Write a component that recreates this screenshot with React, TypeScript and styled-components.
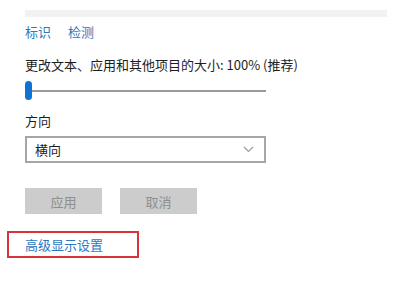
import styled, { createGlobalStyle } from 'styled-components'

const GlobalStyle = createGlobalStyle`
	body {
		margin: 0;
		background: #fff;
		font-family: "Noto Sans CJK SC", "Liberation Sans", sans-serif;
	}
`

const Page = styled.div`
	width: 398px;
	height: 284px;
	padding: 10px 0 0 25px;
	box-sizing: border-box;
	display: flex;
	flex-direction: column;
	overflow: hidden;
`

const TopBar = styled.div`
	width: 362px;
	height: 7px;
	background: #f2f2f2;
`

const LinkRow = styled.div`
	display: flex;
	gap: 17px;
	margin-top: 5px;
	height: 20px;
	align-items: center;
`

const Link = styled.span`
	font-size: 13px;
	line-height: 20px;
	color: #2c79bf;
`

const Label = styled.div<{ $top: number }>`
	margin-top: ${p => p.$top}px;
	font-size: 13px;
	line-height: 20px;
	color: #1e1e1e;
`

const Slider = styled.div`
	margin-top: 6px;
	width: 241px;
	height: 19px;
	display: flex;
	align-items: center;
	position: relative;
`

const Track = styled.div`
	flex: 1;
	height: 2px;
	background: #9a9a9a;
`

const Thumb = styled.div`
	position: absolute;
	left: 0;
	top: 0;
	width: 7px;
	height: 19px;
	border-radius: 4px;
	background: #1172d6;
`

const Select = styled.div`
	margin-top: 5px;
	width: 241px;
	height: 27px;
	box-sizing: border-box;
	border: 2px solid #a6a6a6;
	display: flex;
	align-items: center;
	justify-content: space-between;
	padding: 0 10px 0 8px;
	font-size: 13px;
	color: #1e1e1e;
`

const ButtonRow = styled.div`
	display: flex;
	gap: 18px;
	margin-top: 25px;
`

const Button = styled.div`
	width: 77px;
	height: 26px;
	background: #cccccc;
	color: #8e8e8e;
	font-size: 13px;
	display: flex;
	align-items: center;
	justify-content: center;
`

const Highlight = styled.div`
	margin-top: 17px;
	margin-left: -18px;
	width: 132px;
	height: 27px;
	box-sizing: border-box;
	border: 2px solid #d8323c;
	padding-left: 16px;
	display: flex;
	align-items: center;
`

const Chevron = () => (
	<svg width="11" height="7" viewBox="0 0 11 7">
		<path d="M1 1 L5.5 5.5 L10 1" fill="none" stroke="#999" strokeWidth="1.1" />
	</svg>
)

export default function App() {
	return (
		<Page>
			<GlobalStyle />
			<TopBar />
			<LinkRow>
				<Link>标识</Link>
				<Link>检测</Link>
			</LinkRow>
			<Label $top={13}>更改文本、应用和其他项目的大小: 100% (推荐)</Label>
			<Slider>
				<Track />
				<Thumb />
			</Slider>
			<Label $top={11}>方向</Label>
			<Select>
				<span>横向</span>
				<Chevron />
			</Select>
			<ButtonRow>
				<Button>应用</Button>
				<Button>取消</Button>
			</ButtonRow>
			<Highlight>
				<Link>高级显示设置</Link>
			</Highlight>
		</Page>
	)
}
